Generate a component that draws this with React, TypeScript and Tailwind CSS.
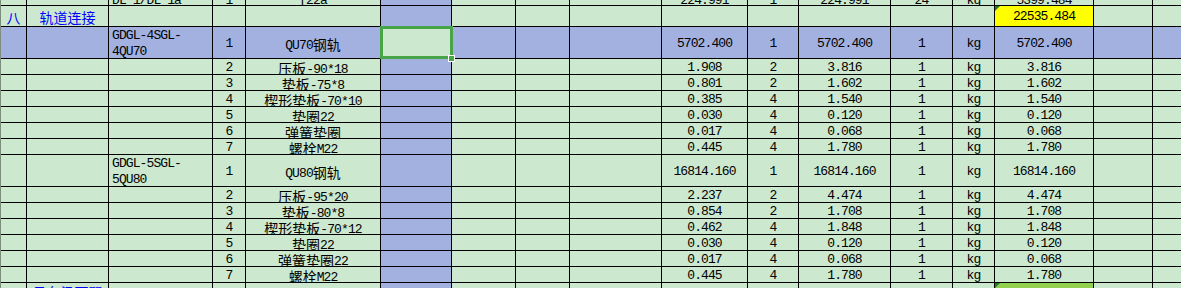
import React from "react";

const COLS =
  "grid grid-rows-1 grid-cols-[26px_82px_104px_33px_135px_71px_64px_54px_92px_86px_51px_92px_62px_42px_99px_59px_60px]";

type Cell = {
  t?: string;
  left?: boolean;
  link?: boolean;
  bg?: string;
  mark?: boolean;
  sel?: boolean;
  wrap?: boolean;
};

// CJK gets its own span so that latin glyphs can be narrower, like SimSun's half-width
const Mix = ({ s }: { s: string }) => {
  const lines = s.split("\n");
  return (
    <>
      {lines.map((line, li) => (
        <div key={li} className="leading-[16px] h-[16px] whitespace-pre">
          {line.split(/([\u4e00-\u9fff]+)/).map((part, i) =>
            /[\u4e00-\u9fff]/.test(part) ? (
              <span
                key={i}
                className="relative top-[1px] font-['Noto_Sans_CJK_SC',sans-serif] text-[14px] tracking-normal leading-none"
              >
                {part}
              </span>
            ) : (
              <span key={i}>{part}</span>
            )
          )}
        </div>
      ))}
    </>
  );
};

const Row = ({
  cells,
  h,
  blue,
  low,
}: {
  cells: Cell[];
  h: string;
  blue?: boolean;
  low?: boolean;
}) => (
  <div className={`${COLS} ${h}`}>
    {Array.from({ length: 17 }).map((_, i) => {
      const c = cells[i] || {};
      let bg = blue || i === 5 ? "bg-[#a2b1e0]" : "bg-[#cce8cf]";
      if (c.sel) bg = "bg-[#cce8cf]";
      if (c.bg) bg = c.bg;
      const vert = low ? "items-end" : "items-center pt-[2px]";
      return (
        <div
          key={i}
          className={`relative min-h-0 border-r border-b border-black flex whitespace-nowrap ${bg} ${
            c.wrap
              ? "flex-col items-start justify-start pl-[3px] pt-[1px]"
              : c.left
              ? `${vert} justify-start pl-[3px]`
              : `${vert} justify-center`
          } ${c.link ? "text-[#0000ff]" : "text-black"}`}
        >
          {c.t && (
            <div className={low ? "translate-y-[4px]" : ""}>
              <Mix s={c.t} />
            </div>
          )}
          {c.mark && (
            <div className="absolute top-0 left-0 w-0 h-0 border-t-[5px] border-r-[5px] border-t-[#1f7a2e] border-r-transparent" />
          )}
          {c.sel && (
            <>
              <div className="absolute z-10 -left-px -top-px -right-[2px] -bottom-px border-[3px] border-[#47a447]" />
              <div className="absolute z-20 -right-[4px] -bottom-[4px] w-[7px] h-[7px] bg-[#47a447] border border-white" />
            </>
          )}
        </div>
      );
    })}
  </div>
);

const part = (
  no: string,
  name: string,
  unit: string,
  qty: string,
  total: string
): Cell[] => [
  {},
  {},
  {},
  { t: no },
  { t: name },
  {},
  {},
  {},
  {},
  { t: unit },
  { t: qty },
  { t: total },
  { t: "1" },
  { t: "kg" },
  { t: total },
];

const set1 = [
  ["2", "压板-90*18", "1.908", "2", "3.816"],
  ["3", "垫板-75*8", "0.801", "2", "1.602"],
  ["4", "楔形垫板-70*10", "0.385", "4", "1.540"],
  ["5", "垫圈22", "0.030", "4", "0.120"],
  ["6", "弹簧垫圈", "0.017", "4", "0.068"],
  ["7", "螺栓M22", "0.445", "4", "1.780"],
];

const set2 = [
  ["2", "压板-95*20", "2.237", "2", "4.474"],
  ["3", "垫板-80*8", "0.854", "2", "1.708"],
  ["4", "楔形垫板-70*12", "0.462", "4", "1.848"],
  ["5", "垫圈22", "0.030", "4", "0.120"],
  ["6", "弹簧垫圈22", "0.017", "4", "0.068"],
  ["7", "螺栓M22", "0.445", "4", "1.780"],
];

export default function App() {
  return (
    <div className="w-[1181px] h-[288px] overflow-hidden bg-[#cce8cf] font-['Liberation_Mono','DejaVu_Sans_Mono',monospace] text-[13px] tracking-[-0.9px]">
      <div className="-mt-[10px] border-l border-[#7d8d7d]">
        <Row
          h="h-[16px]"
          low
          cells={[
            {},
            {},
            { t: "DL 1/DL 1a", left: true },
            { t: "1" },
            { t: "[22a" },
            {},
            {},
            {},
            {},
            { t: "224.991" },
            { t: "1" },
            { t: "224.991" },
            { t: "24" },
            { t: "kg" },
            { t: "5399.484" },
          ]}
        />
        <Row
          h="h-[21px]"
          cells={[
            { t: "八", link: true },
            { t: "轨道连接", link: true },
            {},
            {},
            {},
            {},
            {},
            {},
            {},
            {},
            {},
            {},
            {},
            {},
            { t: "22535.484", bg: "bg-[#ffff00]", mark: true },
          ]}
        />
        <Row
          h="h-[32px]"
          blue
          cells={[
            {},
            {},
            { t: "GDGL-4SGL-\n4QU70", wrap: true },
            { t: "1" },
            { t: "QU70钢轨" },
            { sel: true },
            {},
            {},
            {},
            { t: "5702.400" },
            { t: "1" },
            { t: "5702.400" },
            { t: "1" },
            { t: "kg" },
            { t: "5702.400" },
          ]}
        />
        {set1.map((r) => (
          <Row key={"a" + r[0]} h="h-[16px]" cells={part(r[0], r[1], r[2], r[3], r[4])} />
        ))}
        <Row
          h="h-[32px]"
          cells={[
            {},
            {},
            { t: "GDGL-5SGL-\n5QU80", wrap: true },
            { t: "1" },
            { t: "QU80钢轨" },
            {},
            {},
            {},
            {},
            { t: "16814.160" },
            { t: "1" },
            { t: "16814.160" },
            { t: "1" },
            { t: "kg" },
            { t: "16814.160" },
          ]}
        />
        {set2.map((r) => (
          <Row key={"b" + r[0]} h="h-[16px]" cells={part(r[0], r[1], r[2], r[3], r[4])} />
        ))}
        <Row
          h="h-[16px]"
          cells={[
            {},
            { t: "吊车梁下翼", link: true },
            {},
            {},
            {},
            {},
            {},
            {},
            {},
            {},
            {},
            {},
            {},
            {},
            { bg: "bg-[#92d050]", mark: true },
          ]}
        />
      </div>
    </div>
  );
}
